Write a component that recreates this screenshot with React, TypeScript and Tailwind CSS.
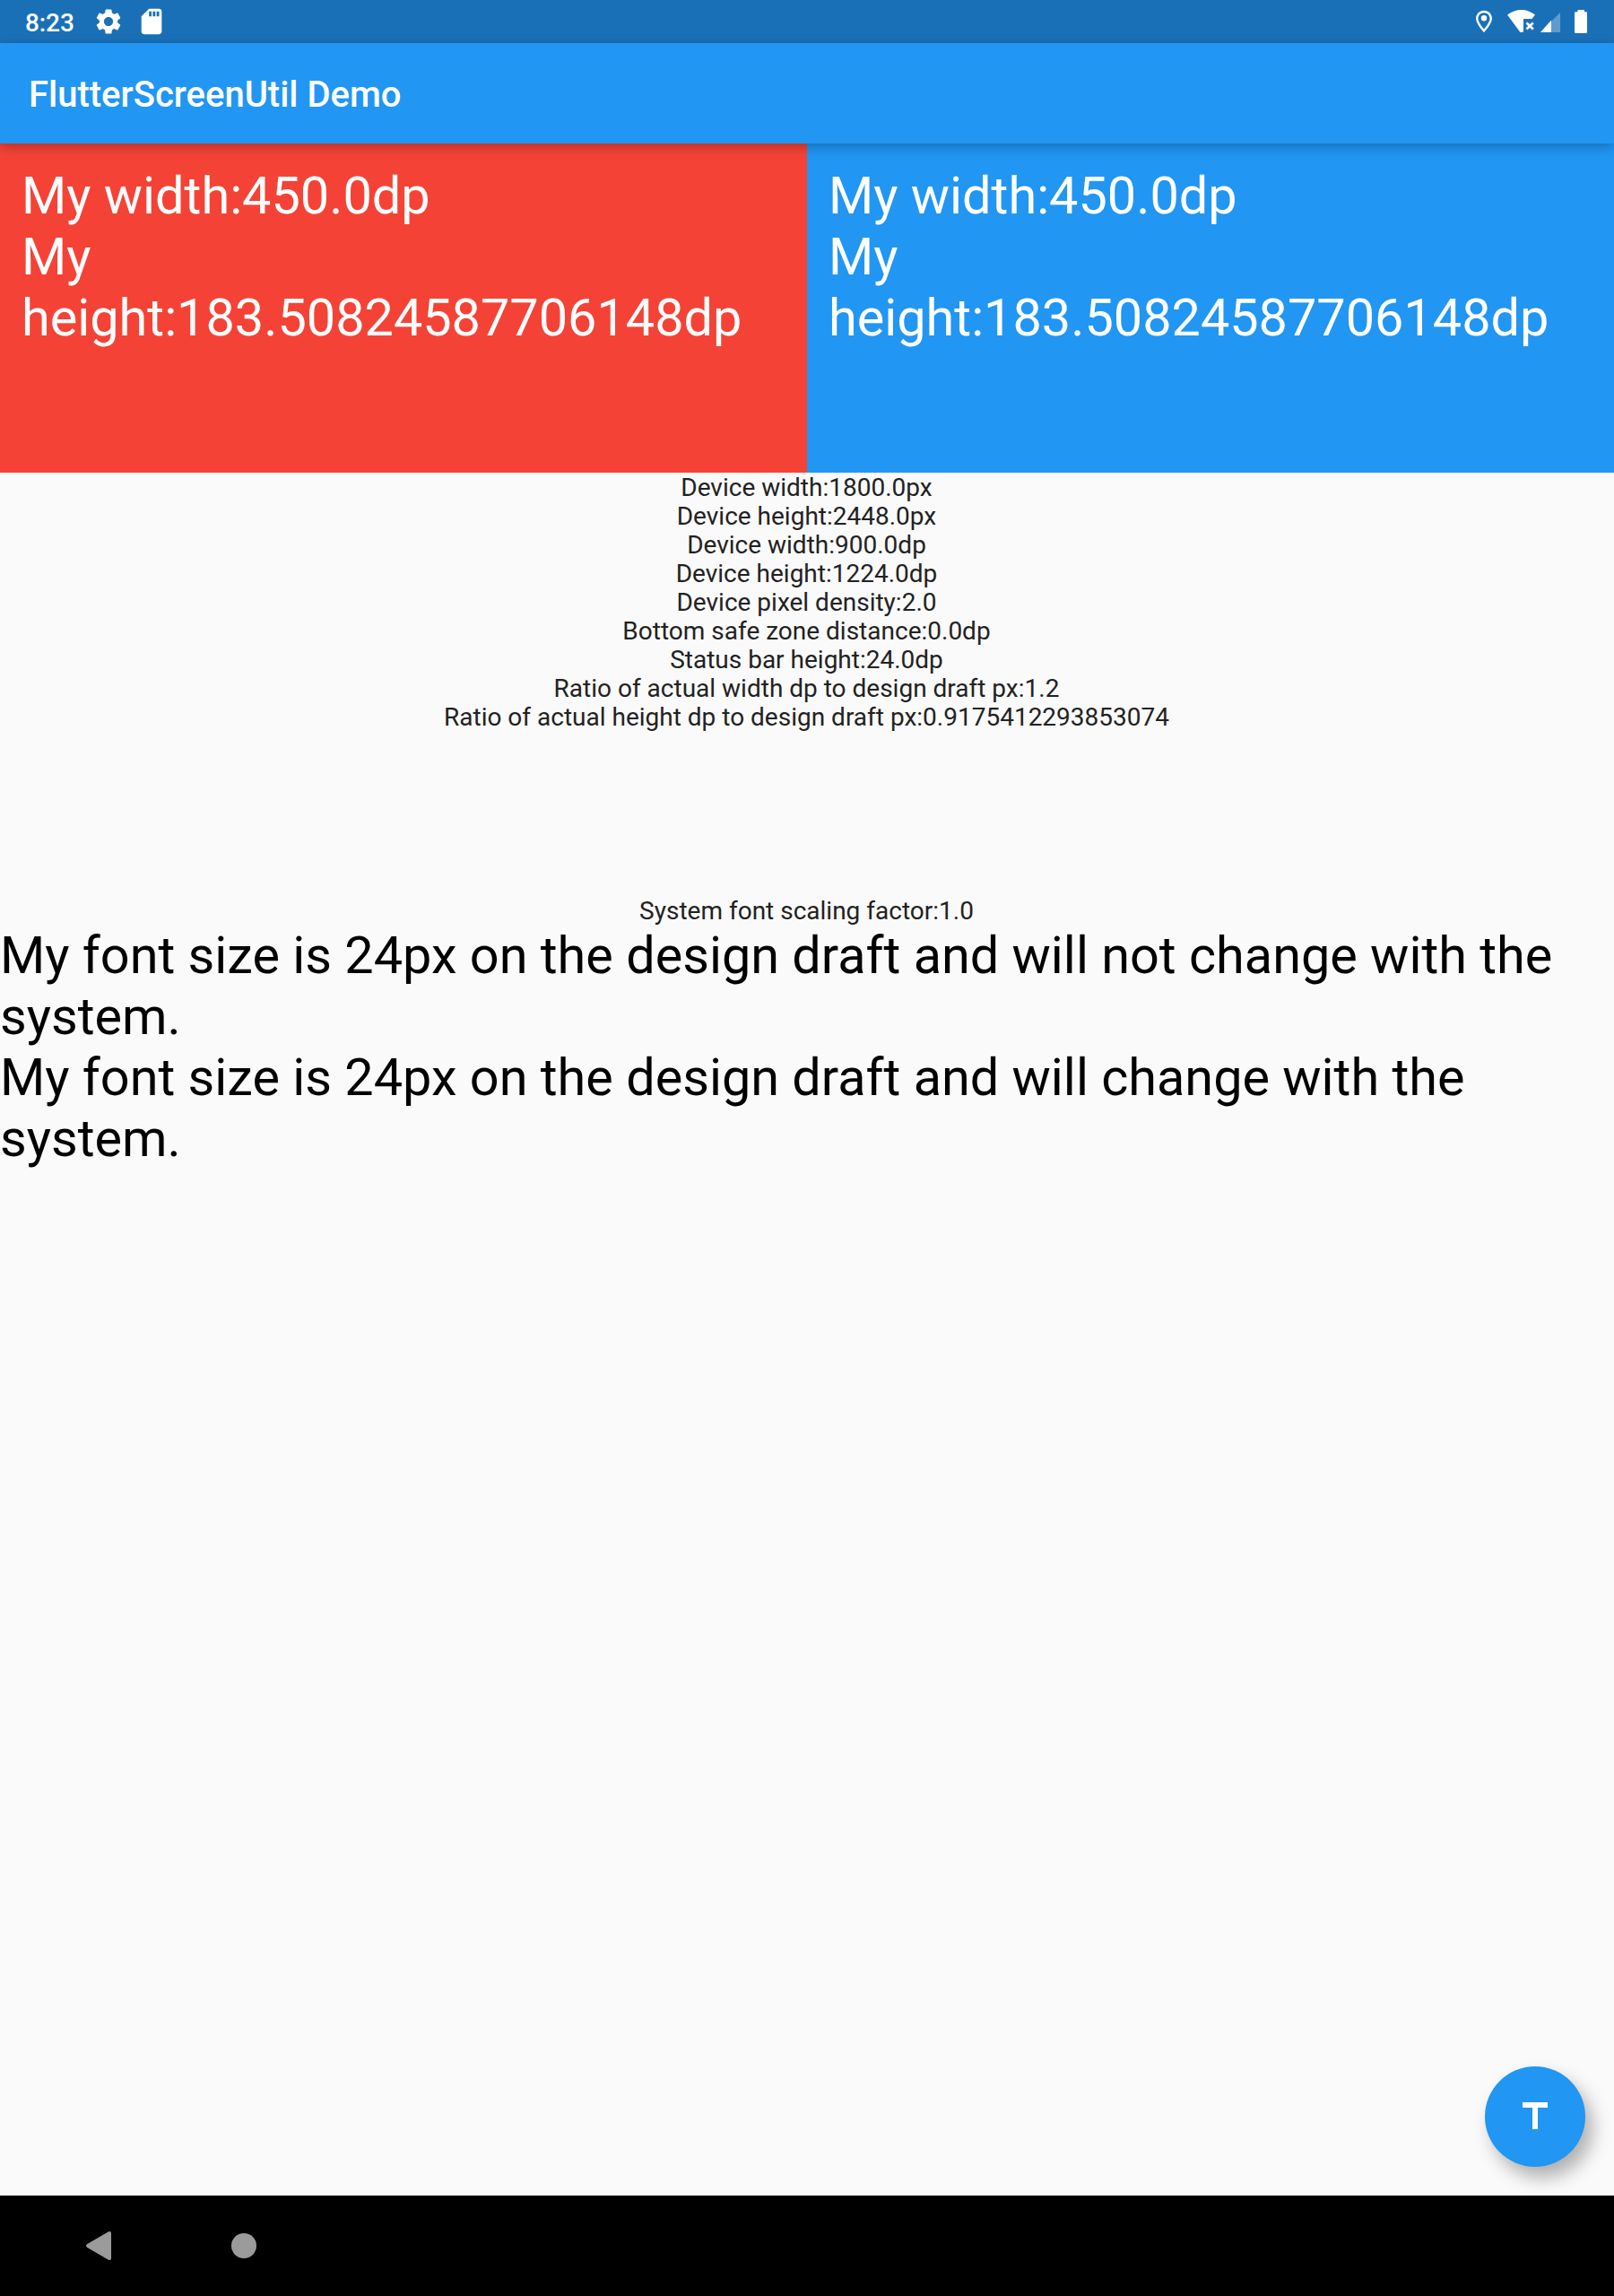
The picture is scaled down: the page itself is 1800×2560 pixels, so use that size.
import React from "react";

const deviceInfo = [
  "Device width:1800.0px",
  "Device height:2448.0px",
  "Device width:900.0dp",
  "Device height:1224.0dp",
  "Device pixel density:2.0",
  "Bottom safe zone distance:0.0dp",
  "Status bar height:24.0dp",
  "Ratio of actual width dp to design draft px:1.2",
  "Ratio of actual height dp to design draft px:0.9175412293853074",
];

function StatusBar() {
  return (
    <div className="flex h-12 shrink-0 items-center justify-between bg-[#1a70b7] pr-[30px] pl-[28px] text-white">
      <div className="flex items-center">
        <span className="w-[76px] pt-[3px] text-[28px] leading-8 font-medium tracking-[-0.1px]">8:23</span>
        <svg className="h-[34px] w-[34px]" viewBox="0 0 24 24" fill="currentColor">
          <path d="M19.14 12.94c.04-.3.06-.61.06-.94 0-.32-.02-.64-.07-.94l2.03-1.58c.18-.14.23-.41.12-.61l-1.92-3.32c-.12-.22-.37-.29-.59-.22l-2.39.96c-.5-.38-1.03-.7-1.62-.94l-.36-2.54c-.04-.24-.24-.41-.48-.41h-3.84c-.24 0-.43.17-.47.41l-.36 2.54c-.59.24-1.13.57-1.62.94l-2.39-.96c-.22-.08-.47 0-.59.22L2.74 8.87c-.12.21-.08.47.12.61l2.03 1.58c-.05.3-.09.63-.09.94s.02.64.07.94l-2.03 1.58c-.18.14-.23.41-.12.61l1.92 3.32c.12.22.37.29.59.22l2.39-.96c.5.38 1.03.7 1.62.94l.36 2.54c.05.24.24.41.48.41h3.84c.24 0 .44-.17.47-.41l.36-2.54c.59-.24 1.13-.56 1.62-.94l2.39.96c.22.08.47 0 .59-.22l1.92-3.32c.12-.22.07-.47-.12-.61l-2.01-1.58zM12 15.6c-1.98 0-3.6-1.62-3.6-3.6s1.62-3.6 3.6-3.6 3.6 1.62 3.6 3.6-1.62 3.6-3.6 3.6z" />
        </svg>
        <svg className="ml-[14px] h-[34px] w-[34px]" viewBox="0 0 24 24" fill="currentColor">
          <path d="M18 2h-8L4.02 8 4 20c0 1.1.9 2 2 2h12c1.1 0 2-.9 2-2V4c0-1.1-.9-2-2-2zm-6 6h-2V4h2v4zm3 0h-2V4h2v4zm3 0h-2V4h2v4z" />
        </svg>
      </div>
      <svg className="h-12 w-[124px]" viewBox="1646 0 124 48" fill="currentColor">
        <path
          fillRule="evenodd"
          d="M1655 11.7c-5 0-9 3.9-9 8.9 0 6.3 9 15.6 9 15.6s9-9.300 9-15.600c0-5-4-8.900-9-8.900zm0 2.500c3.600 0 6.500 2.800 6.500 6.400 0 3.600-3.600 8.700-6.500 11.900-2.900-3.200-6.500-8.300-6.500-11.900 0-3.600 2.900-6.400 6.500-6.400z"
        />
        <circle cx="1655" cy="20.300" r="3.200" />
        <path d="M1681 16.600C1685.500 13 1691 11 1696.600 11s11 2 15.400 5.600L1708.500 21H1699v14.300l-1 .7h-2.600z" />
        <path d="M1702.500 25.500l7.300 7M1709.800 25.500l-7.300 7" stroke="currentColor" strokeWidth="2.600" fill="none" />
        <path d="M1740 14v22h-22z" opacity="0.3" />
        <path d="M1730 22.500V36h-12z" />
        <path d="M1759.500 13.300V11h7.500v2.300h1.800c.7 0 1.200.5 1.200 1.200v21.300c0 .7-.5 1.200-1.200 1.200h-11.600c-.7 0-1.200-.5-1.200-1.200V14.500c0-.7.5-1.200 1.200-1.200z" />
      </svg>
    </div>
  );
}

function SizePanel({ color }: { color: string }) {
  return (
    <div className={`h-[367px] w-[900px] px-6 pt-[25px] text-[57.6px] leading-[68px] text-white ${color}`}>
      <p>My width:450.0dp</p>
      <p>
        My
        <br />
        height:183.50824587706148dp
      </p>
    </div>
  );
}

export default function App() {
  return (
    <div className="relative flex h-[2560px] w-[1800px] flex-col overflow-hidden bg-[#fafafa] font-[Roboto,sans-serif]">
      <StatusBar />
      <header className="z-10 flex h-28 shrink-0 items-center bg-[#2196f3] pt-1 pl-8 text-[40px] font-medium text-white shadow-[0_4px_12px_rgba(0,0,0,0.26)]">
        FlutterScreenUtil Demo
      </header>
      <main className="flex-1 text-[28px] leading-8 text-[#222222]">
        <div className="flex">
          <SizePanel color="bg-[#f44336]" />
          <SizePanel color="bg-[#2196f3]" />
        </div>
        <div className="pt-px pr-px text-center">
          {deviceInfo.map((line) => (
            <p key={line}>{line}</p>
          ))}
        </div>
        <p className="mt-[184px] pr-px text-center">System font scaling factor:1.0</p>
        <div className="text-[57.6px] leading-[68px] text-black">
          <p>My font size is 24px on the design draft and will not change with the system.</p>
          <p>My font size is 24px on the design draft and will change with the system.</p>
        </div>
      </main>
      <button
        aria-label="Title"
        className="absolute right-8 bottom-36 flex h-28 w-28 items-center justify-center rounded-full bg-[#2196f3] text-white shadow-[8px_12px_20px_rgba(0,0,0,0.3)]"
      >
        <svg className="h-12 w-12" viewBox="0 0 24 24" fill="currentColor">
          <path d="M5 4v3h5.500v12h3V7H19V4z" />
        </svg>
      </button>
      <nav className="flex h-28 shrink-0 items-center gap-[134px] bg-black pl-24 text-[#9b9b9b]">
        <svg className="h-8 w-7" viewBox="0 0 28 32" fill="currentColor">
          <path d="M1 14.300 24.600.4Q28-1 28 2.300v27.400q0 3.300-3.400 1.900L1 17.700q-2-1.700 0-3.400z" />
        </svg>
        <div className="h-7 w-7 rounded-full bg-[#9b9b9b]" />
      </nav>
    </div>
  );
}
